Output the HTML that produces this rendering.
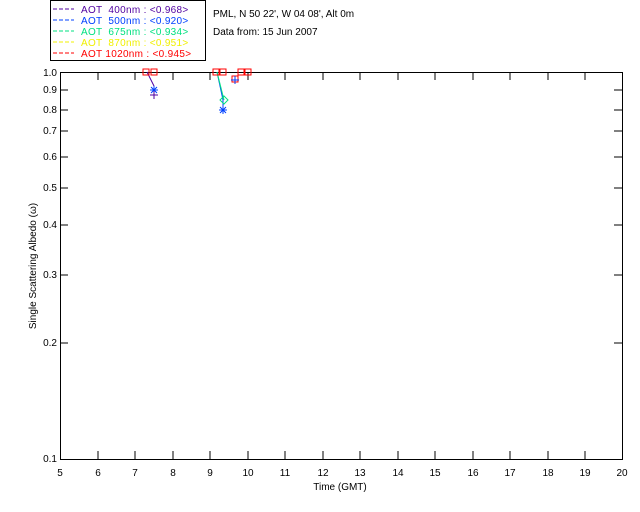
<!DOCTYPE html>
<html><head><style>body{margin:0;background:#fff}svg{display:block}text{font-family:"Liberation Sans",sans-serif;font-size:10px}.lg text{white-space:pre;letter-spacing:0.3px}</style></head><body>
<svg width="640" height="512" xmlns="http://www.w3.org/2000/svg">
<rect width="640" height="512" fill="#fff"/>
<rect x="50.5" y="0.5" width="155" height="60" fill="none" stroke="#000"/>
<g font-size="11" class="lg">
<line x1="53" y1="9" x2="74" y2="9" stroke="#5000a0" stroke-dasharray="4,2"/><text x="81" y="13" fill="#5000a0">AOT  400nm : &lt;0.968&gt;</text>
<line x1="53" y1="20" x2="74" y2="20" stroke="#0040ff" stroke-dasharray="4,2"/><text x="81" y="24" fill="#0040ff">AOT  500nm : &lt;0.920&gt;</text>
<line x1="53" y1="31" x2="74" y2="31" stroke="#00e080" stroke-dasharray="4,2"/><text x="81" y="35" fill="#00e080">AOT  675nm : &lt;0.934&gt;</text>
<line x1="53" y1="42" x2="74" y2="42" stroke="#f0f000" stroke-dasharray="4,2"/><text x="81" y="46" fill="#f0f000">AOT  870nm : &lt;0.951&gt;</text>
<line x1="53" y1="53" x2="74" y2="53" stroke="#ff0000" stroke-dasharray="4,2"/><text x="81" y="57" fill="#ff0000">AOT 1020nm : &lt;0.945&gt;</text>
</g>
<text x="213" y="17" font-size="11">PML, N 50 22', W 04 08', Alt 0m</text>
<text x="213" y="35" font-size="11">Data from: 15 Jun 2007</text>
<rect x="60.5" y="72.5" width="562" height="387" fill="none" stroke="#000"/>
<g stroke="#000">
<path d="M98 459v-8M135 459v-8M173 459v-8M210 459v-8M248 459v-8M285 459v-8M323 459v-8M360 459v-8M398 459v-8M435 459v-8M473 459v-8M510 459v-8M548 459v-8M585 459v-8
M98 72v8M135 72v8M173 72v8M210 72v8M248 72v8M285 72v8M323 72v8M360 72v8M398 72v8M435 72v8M473 72v8M510 72v8M548 72v8M585 72v8
M60 90h8M60 110h8M60 131h8M60 157h8M60 188h8M60 225h8M60 275h8M60 343h8
M622 90h-8M622 110h-8M622 131h-8M622 157h-8M622 188h-8M622 225h-8M622 275h-8M622 343h-8"/>
</g>
<g font-size="10" text-anchor="end">
<text x="57" y="76">1.0</text><text x="57" y="93">0.9</text><text x="57" y="113">0.8</text><text x="57" y="134">0.7</text><text x="57" y="160">0.6</text><text x="57" y="191">0.5</text><text x="57" y="228">0.4</text><text x="57" y="278">0.3</text><text x="57" y="346">0.2</text><text x="57" y="462">0.1</text>
</g>
<g font-size="10" text-anchor="middle">
<text x="60" y="476">5</text><text x="98" y="476">6</text><text x="135" y="476">7</text><text x="173" y="476">8</text><text x="210" y="476">9</text><text x="248" y="476">10</text><text x="285" y="476">11</text><text x="323" y="476">12</text><text x="360" y="476">13</text><text x="398" y="476">14</text><text x="435" y="476">15</text><text x="473" y="476">16</text><text x="510" y="476">17</text><text x="548" y="476">18</text><text x="585" y="476">19</text><text x="622" y="476">20</text>
<text x="340" y="490">Time (GMT)</text>
</g>
<text transform="translate(36,266) rotate(-90)" text-anchor="middle" font-size="10">Single Scattering Albedo (ω)</text>
<g fill="none">
<path d="M147 72L154 86L154 93" stroke="#5000a0"/>
<path d="M217 72L223 100L223 110" stroke="#0040ff"/>
<path d="M217 72L224 100" stroke="#00e080"/>
<path d="M154 86v8M150 90h8M151 87l6 6M157 87l-6 6" stroke="#0040ff"/>
<path d="M154 91v8M150 95h8" stroke="#5000a0"/>
<path d="M223 106v8M219 110h8M220 107l6 6M226 107l-6 6" stroke="#0040ff"/>
<path d="M224 96l4 4-4 4-4-4z" stroke="#00e080"/>
<rect x="143" y="69" width="6" height="6" stroke="#f00"/><rect x="151" y="69" width="6" height="6" stroke="#f00"/>
<rect x="213" y="69" width="6" height="6" stroke="#f00"/><rect x="220" y="69" width="6" height="6" stroke="#f00"/>
<rect x="232" y="76" width="6" height="6" stroke="#f00"/><rect x="238" y="69" width="6" height="6" stroke="#f00"/><rect x="245" y="69" width="6" height="6" stroke="#f00"/>
<path d="M235 76v8M231 80h8" stroke="#0040ff"/>
</g>
</svg>
</body></html>
